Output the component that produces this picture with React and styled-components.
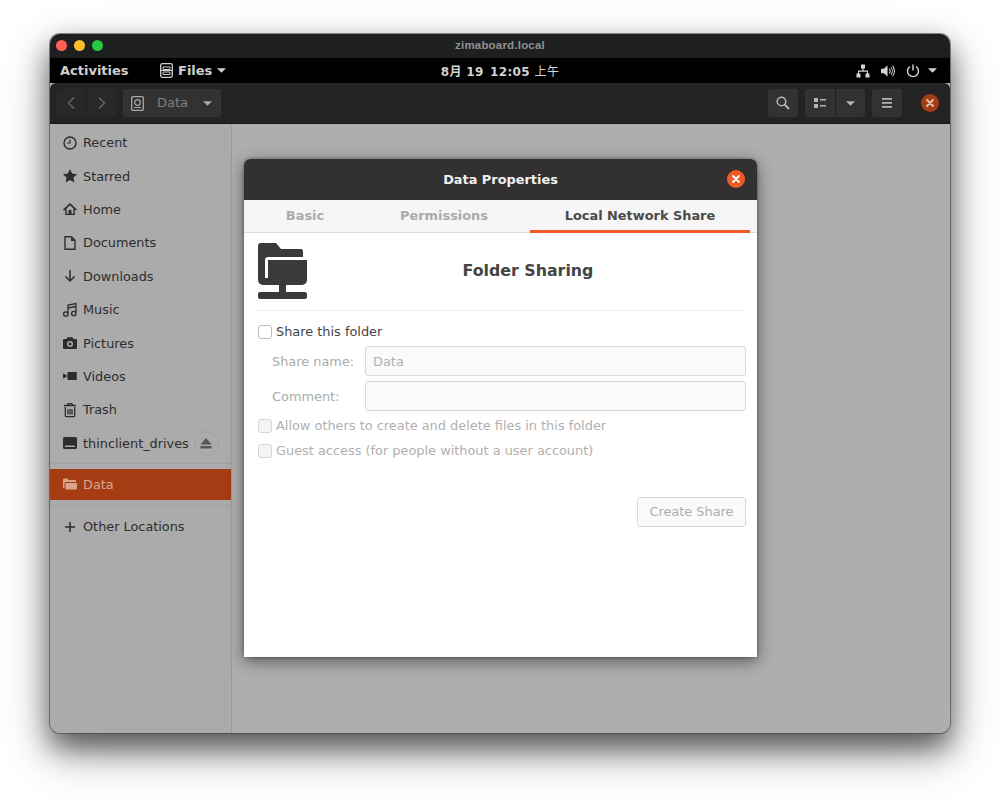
import React from "react";
import styled, { createGlobalStyle } from "styled-components";

const Global = createGlobalStyle`
  html, body { margin: 0; padding: 0; background: #fff; height: 100%; overflow: hidden; }
  body { font-family: "DejaVu Sans", "Noto Sans CJK SC", sans-serif; }
  * { box-sizing: border-box; }
`;

const Stage = styled.div`
  width: 1000px;
  height: 799px;
  padding: 34px 50px 66px;
  background: #fff;
`;
const Win = styled.div`
  width: 900px;
  height: 699px;
  border-radius: 10px;
  overflow: hidden;
  display: flex;
  flex-direction: column;
  background: #aeaeae;
  box-shadow: 0 0 0 1px rgba(60,60,60,.55), 0 14px 28px rgba(0,0,0,.55), 0 20px 50px rgba(0,0,0,.3);
  position: relative;
`;
const TitleBar = styled.div`
  height: 24px;
  flex: none;
  background: #1e1f21;
  position: relative;
  display: flex;
  align-items: center;
  justify-content: center;
  padding: 0 0 2px;
  color: #8f9092;
  font: 700 11.5px "Liberation Sans", sans-serif;
  letter-spacing: .2px;
`;
const Lights = styled.div`
  position: absolute;
  left: 6px;
  top: 6px;
  display: flex;
  gap: 7px;
`;
const Light = styled.span`
  width: 11px;
  height: 11px;
  border-radius: 50%;
  background: ${p => p.$c};
`;
const TopBar = styled.div`
  height: 25px;
  flex: none;
  background: #000;
  display: grid;
  grid-template-columns: 1fr auto 1fr;
  align-items: center;
  padding: 0 10px;
  color: #cfcfcf;
  font-size: 13px;
  font-weight: 700;
`;
const TopLeft = styled.div`
  display: flex;
  align-items: center;
`;
const Activities = styled.span`
  width: 100px;
`;
const TopItem = styled.span`
  display: flex;
  align-items: center;
  gap: 5px;
`;
const Clock = styled.span`
  font-weight: 700;
  font-size: 12px;
  letter-spacing: .35px;
  color: #d2d2d2;
  white-space: pre;
`;
const ClockCjk = styled.span`
  font-weight: 400;
`;
const TopRight = styled.div`
  display: flex;
  justify-content: flex-end;
  align-items: center;
  padding-right: 3px;
`;
const Toolbar = styled.div`
  height: 41px;
  flex: none;
  background: #232323;
  border-radius: 6px 6px 0 0;
  border-bottom: 1px solid #161616;
  display: flex;
  align-items: center;
  padding: 0 11px 0 6px;
  gap: 7px;
`;
const ToolGroup = styled.div`
  display: flex;
  height: 28px;
  border-radius: 3px;
  overflow: hidden;
  background: ${p => p.$dim ? "#282828" : "#323232"};
`;
const ToolBtn = styled.div`
  width: ${p => p.$w || 30}px;
  height: 100%;
  display: flex;
  align-items: center;
  justify-content: center;
  & + & { border-left: 1px solid #1f1f1f; }
`;
const PathBtn = styled.div`
  width: 98px;
  height: 28px;
  background: #323232;
  border-radius: 3px;
  display: flex;
  align-items: center;
  padding: 0 9px 0 8px;
  color: #7f7f7f;
  font-size: 13px;
`;
const PathLabel = styled.span`
  flex: 1;
  text-align: center;
  padding: 0 2px 1px 0;
`;
const Spacer = styled.div`
  flex: 1;
`;
const CloseDot = styled.div`
  width: 18px;
  height: 18px;
  margin-left: 12px;
  border-radius: 50%;
  background: ${p => p.$c || "#a63c14"};
  display: flex;
  align-items: center;
  justify-content: center;
  flex: none;
`;
const Body = styled.div`
  flex: 1;
  display: flex;
  min-height: 0;
`;
const Sidebar = styled.div`
  width: 182px;
  flex: none;
  background: #ababab;
  border-right: 1px solid #9c9c9c;
  padding-top: 2px;
  display: flex;
  flex-direction: column;
`;
const Row = styled.div`
  height: ${p => p.$h || 33.4}px;
  flex: none;
  display: flex;
  align-items: center;
  padding-left: 12px;
  color: #2d2d2d;
  font-size: 12.85px;
  background: ${p => p.$active ? "#a63c14" : "transparent"};
  ${p => p.$active && "color: #d9a48c;"}
`;
const IconWrap = styled.span`
  width: 15px;
  height: 15px;
  margin-right: 6px;
  display: flex;
  align-items: center;
  justify-content: center;
  flex: none;
`;
const Eject = styled.span`
  width: 25px;
  height: 25px;
  margin-left: 5px;
  border-radius: 50%;
  border: 1px solid #a0a0a0;
  display: flex;
  align-items: center;
  justify-content: center;
  flex: none;
`;
const Sep = styled.div`
  height: 1px;
  background: #a1a1a1;
  margin: ${p => p.$m};
  flex: none;
`;
const Main = styled.div`
  flex: 1;
  background: #aeaeae;
  padding: 35px 0 0 12px;
`;
const Dialog = styled.div`
  width: 513px;
  height: 498px;
  background: #fff;
  border-radius: 6px 6px 0 0;
  display: flex;
  flex-direction: column;
  box-shadow: 0 4px 16px rgba(0,0,0,.5), 0 0 3px rgba(0,0,0,.4);
  overflow: hidden;
`;
const DialogHead = styled.div`
  height: 41px;
  flex: none;
  background: #323030;
  color: #f0f0f0;
  font-weight: 700;
  font-size: 12.9px;
  display: flex;
  align-items: center;
  justify-content: center;
  position: relative;
  & > div:last-child { position: absolute; right: 12px; top: 11px; margin: 0; }
`;
const Tabs = styled.div`
  height: 33px;
  flex: none;
  background: #f6f6f6;
  border-bottom: 1px solid #dcdcdc;
  display: flex;
  padding-right: 7px;
  font-size: 12.9px;
  font-weight: 700;
`;
const Tab = styled.div`
  width: ${p => p.$w}px;
  flex: none;
  display: flex;
  align-items: center;
  justify-content: center;
  color: ${p => p.$active ? "#4a4a4a" : "#aaaaaa"};
  height: 33px;
  border-bottom: 3px solid ${p => p.$active ? "#ef5a27" : "transparent"};
  padding: 1px ${p => p.$pr || 0}px 0 0;
`;
const Content = styled.div`
  flex: 1;
  padding: 10px 11px 0 11px;
  display: flex;
  flex-direction: column;
`;
const Header = styled.div`
  display: flex;
  align-items: flex-start;
  height: 68px;
  padding-left: 3px;
  border-bottom: 1px solid #ececec;
  flex: none;
  margin-bottom: 8px;
`;
const HeadTitle = styled.div`
  flex: 1;
  text-align: center;
  font-size: 15.8px;
  line-height: 18px;
  margin-top: 19px;
  padding-left: 2px;
  font-weight: 700;
  color: #444;
`;
const CheckRow = styled.div`
  height: 25px;
  display: flex;
  align-items: center;
  font-size: 12.9px;
  color: ${p => p.$off ? "#b0b0b0" : "#444"};
  flex: none;
  margin-bottom: ${p => p.$mb || 0}px;
`;
const Box = styled.span`
  width: 14px;
  height: 14px;
  border: 1px solid ${p => p.$off ? "#d6d6d6" : "#bdbdbd"};
  border-radius: 3px;
  background: ${p => p.$off ? "#f4f4f4" : "#fff"};
  margin: 0 4px 0 3px;
  flex: none;
`;
const FormRow = styled.div`
  height: 30px;
  display: flex;
  align-items: center;
  margin-bottom: ${p => p.$mb}px;
  flex: none;
`;
const FieldLabel = styled.span`
  width: 110px;
  padding-left: 17px;
  font-size: 12.9px;
  color: #ababab;
  flex: none;
`;
const Field = styled.div`
  flex: 1;
  height: 30px;
  background: #fafafa;
  border: 1px solid #d8d8d8;
  border-radius: 3px;
  padding: 0 7px;
  display: flex;
  align-items: center;
  font-size: 12.9px;
  color: #b0b0b0;
`;
const Actions = styled.div`
  display: flex;
  justify-content: flex-end;
  margin-top: 34px;
`;
const DisabledButton = styled.div`
  width: 109px;
  height: 30px;
  background: #fafafa;
  border: 1px solid #d8d8d8;
  border-radius: 3px;
  font-size: 12.9px;
  color: #aeaeae;
  display: flex;
  align-items: center;
  justify-content: center;
  padding-bottom: 1px;
`;

const I = ({ size = 16, vb = "0 0 16 16", children }) => (
  <svg width={size} height={size} viewBox={vb} fill="none" style={{ flex: "none" }}>{children}</svg>
);
const D = "#2d2d2d";

const icons = {
  recent: <I><circle cx="8" cy="8" r="6" stroke={D} strokeWidth="1.4"/><path d="M8 4.5V8H5" stroke={D} strokeWidth="1.2"/></I>,
  star: <I><path d="M8 1l2.1 4.6 5 .6-3.7 3.4 1 5L8 11.9 3.6 14.6l1-5L.9 6.2l5-.6z" fill={D}/></I>,
  home: <I><path d="M8 2L1 8.5l1 1 1.2-1V14h9.6V8.500l1.200 1 1-1zM4.600 12.800V7.400L8 4.200l3.400 3.200v5.400H9.500V9h-3v3.800z" fill={D}/></I>,
  doc: <I><path d="M3 1.700h6.500L13 5.200V14.300H3z" stroke={D} strokeWidth="1.4" strokeLinejoin="round"/><path d="M9 2v4h4" fill={D}/></I>,
  down: <I><path d="M8 2v11M3.500 8.500 8 13l4.500-4.500" stroke={D} strokeWidth="1.5"/></I>,
  music: <I><path d="M6 11.500V3l8-1.500V10.500M6 6l8-1.500" stroke={D} strokeWidth="1.3"/><circle cx="3.800" cy="12" r="2.200" stroke={D} strokeWidth="1.3"/><circle cx="11.800" cy="11.500" r="2.200" stroke={D} strokeWidth="1.3"/></I>,
  camera: <I><path fillRule="evenodd" clipRule="evenodd" d="M2 4h2.500l1-1.800h5L11.500 4H14a1 1 0 0 1 1 1v8a1 1 0 0 1-1 1H2a1 1 0 0 1-1-1V5a1 1 0 0 1 1-1zm6 2a3 3 0 1 0 0 6 3 3 0 0 0 0-6zm0 1.500a1.500 1.500 0 1 1 0 3 1.500 1.500 0 0 1 0-3z" fill={D}/></I>,
  video: <I><path d="M5.500 4h8.500a.8.8 0 0 1 .8.8v6.400a.8.8 0 0 1-.8.8H5.500z" fill={D}/><path d="M1 5.500l3.500 1.500v2L1 10.500z" fill={D}/></I>,
  trash: <I><path d="M3.300 5v8.500a1.200 1.200 0 0 0 1.200 1.200h7a1.200 1.200 0 0 0 1.200-1.200V5M2 3.500h12M5.500 3.500l.6-1.800h3.800l.6 1.800M6 7v5.500M8 7v5.500M10 7v5.500" stroke={D} strokeWidth="1.300"/></I>,
  drive: <I><path fillRule="evenodd" clipRule="evenodd" d="M2.500 2h11A1.500 1.500 0 0 1 15 3.500v9a1.500 1.500 0 0 1-1.500 1.500h-11A1.500 1.500 0 0 1 1 12.500v-9A1.500 1.500 0 0 1 2.500 2zM3 10.500v1.500h10v-1.500z" fill={D}/></I>,
  folder: <I><path d="M1 3.500A1 1 0 0 1 2 2.500h3.500L7 4h6a1 1 0 0 1 1 1v1H4a1.500 1.500 0 0 0-1.500 1.500V12H2a1 1 0 0 1-1-1z" fill="#d9a48c"/><path d="M3.500 8a1 1 0 0 1 1-1H15v5.500a1 1 0 0 1-1 1H3.500z" fill="#d9a48c"/></I>,
  plus: <I><path d="M8 3v10M3 8h10" stroke={D} strokeWidth="1.500"/></I>,
};

const items = [
  ["recent", "Recent"], ["star", "Starred"], ["home", "Home"], ["doc", "Documents"],
  ["down", "Downloads"], ["music", "Music"], ["camera", "Pictures"], ["video", "Videos"], ["trash", "Trash"],
];

const Caret = ({ c = "#cfcfcf", w = 10 }) => (
  <svg width={w} height="5" viewBox="0 0 10 5"><path d="M0 0h10L5 5z" fill={c}/></svg>
);
const X = ({ c = "#fff", s = 8 }) => (
  <svg width={s} height={s} viewBox="0 0 8 8"><path d="M1 1l6 6M7 1L1 7" stroke={c} strokeWidth="1.900" strokeLinecap="round"/></svg>
);

export default function App() {
  return (
    <>
      <Global />
      <Stage>
        <Win>
          <TitleBar>
            <Lights>
              <Light $c="#fe5f57" />
              <Light $c="#febc2e" />
              <Light $c="#28c840" />
            </Lights>
            zimaboard.local
          </TitleBar>
          <TopBar>
            <TopLeft>
              <Activities>Activities</Activities>
              <TopItem>
                <svg width="13" height="15" viewBox="0 0 13 15" fill="none">
                  <rect x=".7" y=".7" width="11.600" height="13.600" rx="1.500" stroke="#cfcfcf" strokeWidth="1.300"/>
                  <path d="M3 4h7v2.500H3zM3 9h7v2.500H3z" stroke="#cfcfcf" strokeWidth="1"/>
                  <path d="M1 7.500h11" stroke="#cfcfcf"/>
                </svg>
                Files
                <Caret w={9} />
              </TopItem>
            </TopLeft>
            <Clock>{"8月 19\u200212:05 "}<ClockCjk>上午</ClockCjk></Clock>
            <TopRight>
              <svg width="14" height="14" viewBox="0 0 14 14" style={{ marginRight: 11 }}>
                <path d="M5 .5h4v4H7.600v2H12v3h1.500v4h-4v-4H11V7.700H3V9.500h1.500v4h-4v-4H2v-3h4.400v-2H5z" fill="#d4d4d4"/>
              </svg>
              <svg width="14" height="14" viewBox="0 0 15 14" fill="none" style={{ marginRight: 11 }}>
                <path d="M0 4.500h3L7 1v12L3 9.500H0z" fill="#d4d4d4"/>
                <path d="M8.800 4.500a3.500 3.500 0 0 1 0 5M10.600 3a6 6 0 0 1 0 8M12.400 1.500a8.500 8.500 0 0 1 0 11" stroke="#d4d4d4" strokeWidth="1.100"/>
              </svg>
              <svg width="14" height="14" viewBox="0 0 14 14" fill="none" style={{ marginRight: 8 }}>
                <path d="M7 .5v6M4 2.500a5.500 5.500 0 1 0 6 0" stroke="#d8d8d8" strokeWidth="1.400"/>
              </svg>
              <Caret w={9} />
            </TopRight>
          </TopBar>
          <Toolbar>
            <ToolGroup $dim>
              <ToolBtn $w={30}>
                <svg width="10" height="14" viewBox="0 0 10 14" fill="none"><path d="M8 1.500 2.500 7 8 12.500" stroke="#686868" strokeWidth="1.400"/></svg>
              </ToolBtn>
              <ToolBtn $w={30}>
                <svg width="10" height="14" viewBox="0 0 10 14" fill="none"><path d="M2 1.500 7.500 7 2 12.500" stroke="#686868" strokeWidth="1.400"/></svg>
              </ToolBtn>
            </ToolGroup>
            <PathBtn>
              <svg width="13" height="15" viewBox="0 0 13 15" fill="none">
                <rect x=".7" y=".7" width="11.600" height="13.600" rx="1.200" stroke="#a8a8a8" strokeWidth="1.300"/>
                <circle cx="6.500" cy="6.500" r="2.800" stroke="#a8a8a8" strokeWidth="1.200"/>
                <path d="M3 11.500h7" stroke="#a8a8a8"/>
              </svg>
              <PathLabel>Data</PathLabel>
              <Caret c="#a8a8a8" w={9} />
            </PathBtn>
            <Spacer />
            <ToolGroup>
              <ToolBtn $w={30}>
                <svg width="14" height="14" viewBox="0 0 14 14" fill="none"><circle cx="5.500" cy="5.500" r="4.300" stroke="#b5b5b5" strokeWidth="1.600"/><path d="M8.800 8.800 13 13" stroke="#b5b5b5" strokeWidth="2"/></svg>
              </ToolBtn>
            </ToolGroup>
            <ToolGroup>
              <ToolBtn $w={30}>
                <svg width="12" height="10" viewBox="0 0 12 10"><path d="M0 0h4v4H0zM0 6h4v4H0zM6 1h6v1.600H6zM6 7h6v1.600H6z" fill="#b5b5b5"/></svg>
              </ToolBtn>
              <ToolBtn $w={30}><Caret c="#b5b5b5" w={9} /></ToolBtn>
            </ToolGroup>
            <ToolGroup>
              <ToolBtn $w={30}>
                <svg width="10" height="10" viewBox="0 0 10 10"><path d="M0 0h10v1.800H0zM0 4h10v1.800H0zM0 8h10v1.800H0z" fill="#b5b5b5"/></svg>
              </ToolBtn>
            </ToolGroup>
            <CloseDot><X c="#dcc4b8" /></CloseDot>
          </Toolbar>
          <Body>
            <Sidebar>
              {items.map(([k, t]) => (
                <Row key={t}><IconWrap>{icons[k]}</IconWrap>{t}</Row>
              ))}
              <Row>
                <IconWrap>{icons.drive}</IconWrap>thinclient_drives
                <Eject>
                  <svg width="12" height="11" viewBox="0 0 12 11"><path d="M6 0l5.500 6.500H.5zM.5 8h11v2.500H.5z" fill="#555"/></svg>
                </Eject>
              </Row>
              <Sep $m="3px 0 5px" />
              <Row $h={31} $active><IconWrap>{icons.folder}</IconWrap>Data</Row>
              <Sep $m="5px 0 4px" />
              <Row><IconWrap>{icons.plus}</IconWrap>Other Locations</Row>
            </Sidebar>
            <Main>
              <Dialog>
                <DialogHead>
                  Data Properties
                  <CloseDot $c="#ef5a27"><X /></CloseDot>
                </DialogHead>
                <Tabs>
                  <Tab $w={122}>Basic</Tab>
                  <Tab $w={164} $pr={8}>Permissions</Tab>
                  <Tab $w={220} $active>Local Network Share</Tab>
                </Tabs>
                <Content>
                  <Header>
                    <svg width="50" height="57" viewBox="0 0 50 57">
                      <path d="M0 3a3 3 0 0 1 3-3h15l5 6h20a2 2 0 0 1 2 2v6H10a3 3 0 0 0-3 3v18h3V17h39v20a5 5 0 0 1-5 5H28v7h19a2 2 0 0 1 2 2v3a2 2 0 0 1-2 2H2a2 2 0 0 1-2-2v-3a2 2 0 0 1 2-2h19v-7H5a5 5 0 0 1-5-5z" fill="#3a3a3a"/>
                    </svg>
                    <HeadTitle>Folder Sharing</HeadTitle>
                  </Header>
                  <CheckRow $mb={2}><Box />Share this folder</CheckRow>
                  <FormRow $mb={5}>
                    <FieldLabel>Share name:</FieldLabel>
                    <Field>Data</Field>
                  </FormRow>
                  <FormRow $mb={2}>
                    <FieldLabel>Comment:</FieldLabel>
                    <Field />
                  </FormRow>
                  <CheckRow $off><Box $off />Allow others to create and delete files in this folder</CheckRow>
                  <CheckRow $off><Box $off />Guest access (for people without a user account)</CheckRow>
                  <Actions><DisabledButton>Create Share</DisabledButton></Actions>
                </Content>
              </Dialog>
            </Main>
          </Body>
        </Win>
      </Stage>
    </>
  );
}
